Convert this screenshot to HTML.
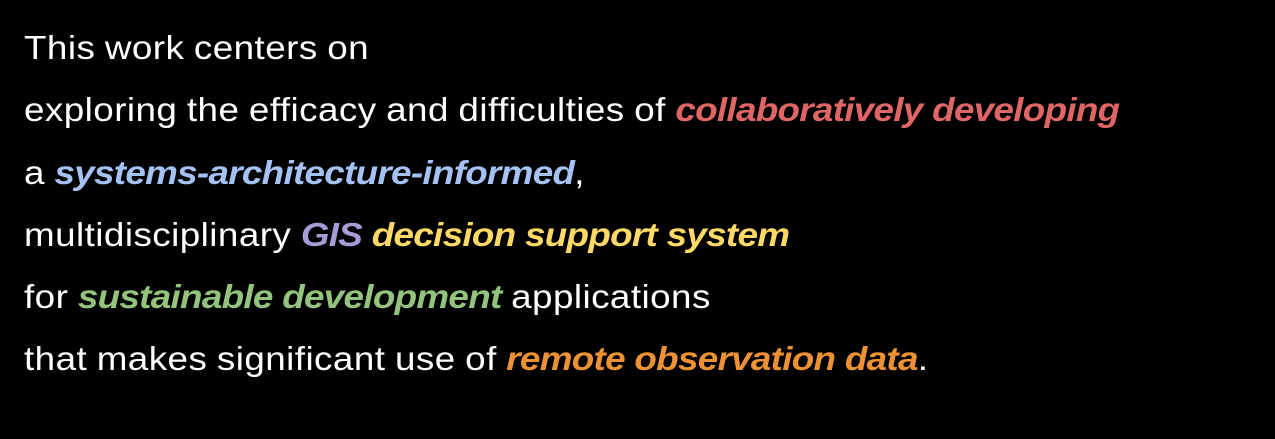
<!DOCTYPE html>
<html><head><style>
html,body{margin:0;background:#000;width:1275px;height:439px;overflow:hidden}
.l{position:absolute;left:24px;color:#fff;font-family:"Liberation Sans",sans-serif;font-size:33px;white-space:nowrap;transform-origin:0 0;transform:scaleX(1.115);line-height:40px;letter-spacing:0.4px;word-spacing:-1px}
b{font-style:italic;letter-spacing:-0.62px;word-spacing:0}
.r{color:#e06666}.bl{color:#a4c2f4}.p{color:#a99cd6}.y{color:#ffd966}.g{color:#93c47d}.o{color:#ec9234}
</style></head><body>
<div class="l" style="top:28px">This work centers on</div>
<div class="l" style="top:90px">exploring the efficacy and difficulties of <b class="r">collaboratively developing</b></div>
<div class="l" style="top:153px">a <b class="bl">systems-architecture-informed</b>,</div>
<div class="l" style="top:215px">multidisciplinary <b class="p">GIS</b> <b class="y">decision support system</b></div>
<div class="l" style="top:277px">for <b class="g">sustainable development</b> applications</div>
<div class="l" style="top:339px">that makes significant use of <b class="o">remote observation data</b>.</div>
</body></html>
